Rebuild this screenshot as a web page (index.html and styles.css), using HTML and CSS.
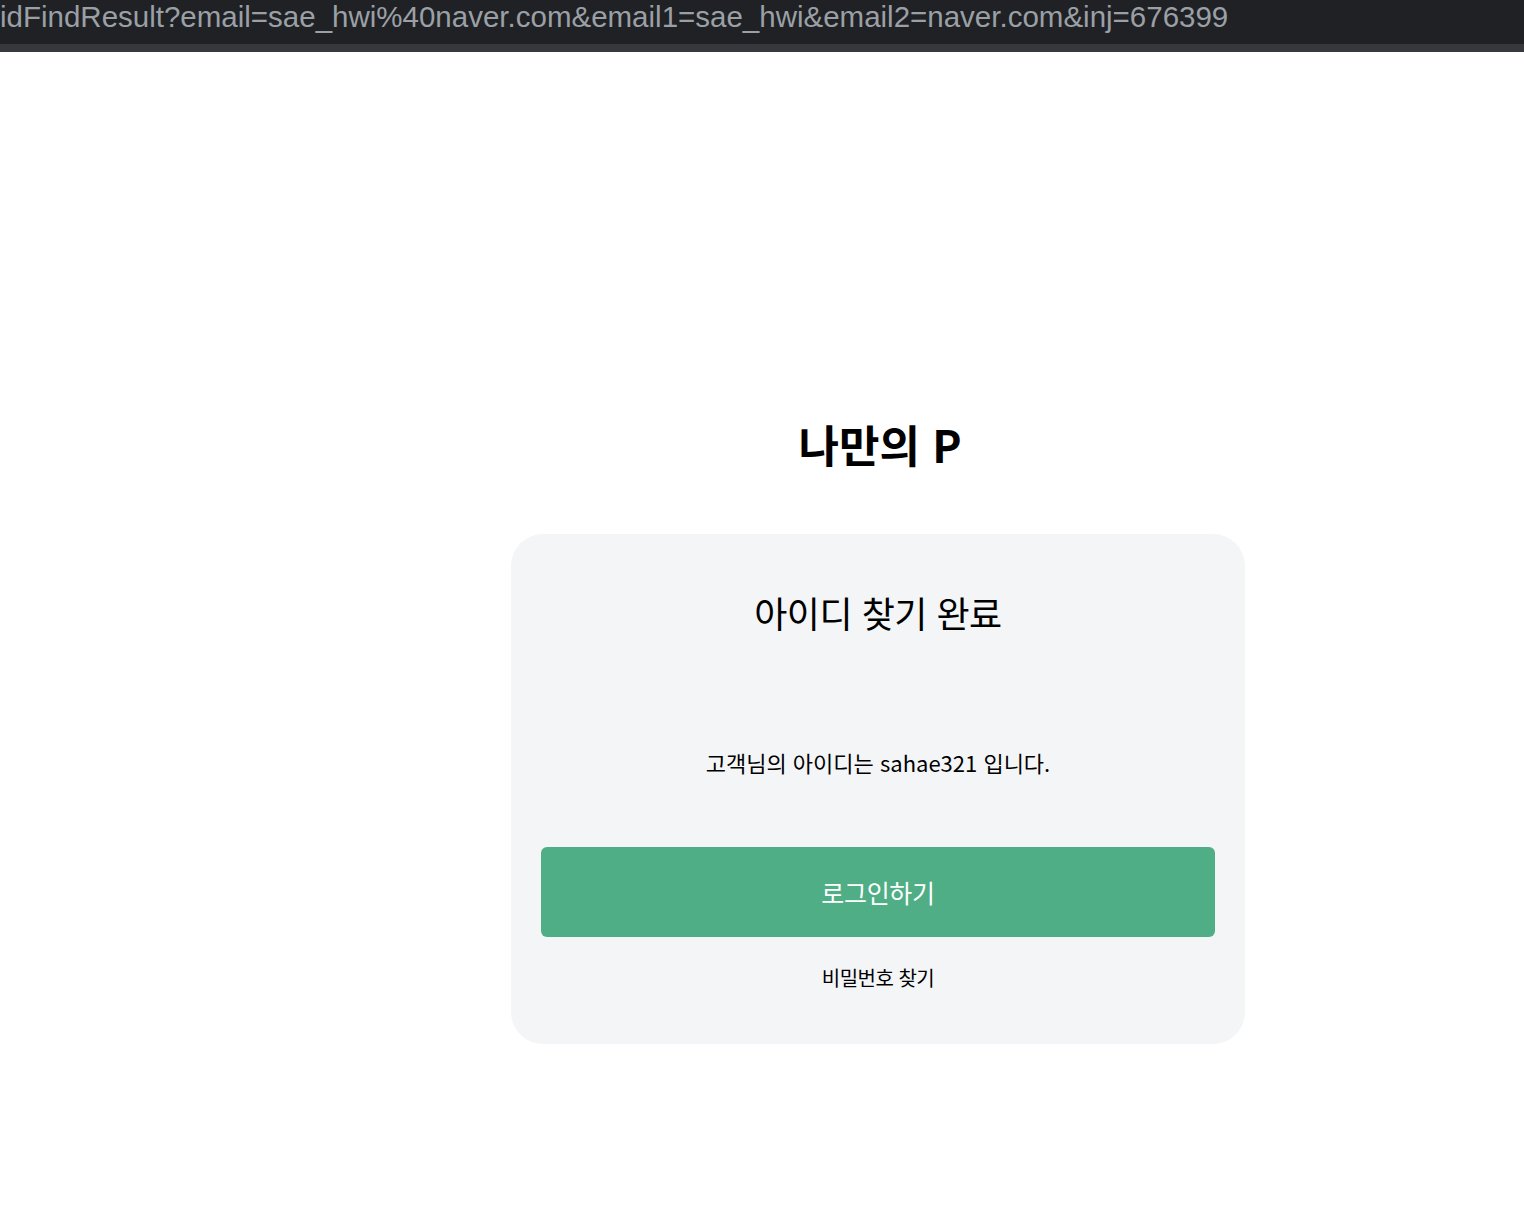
FILE: index.html
```html
<!DOCTYPE html>
<html lang="ko">
<head>
<meta charset="utf-8">
<title>아이디 찾기 완료</title>
<link rel="stylesheet" href="styles.css">
</head>
<body>
<header class="urlbar">
  <div class="url">idFindResult?email=sae_hwi%40naver.com&amp;email1=sae_hwi&amp;email2=naver.com&amp;inj=676399</div>
</header>
<div class="urlstrip"></div>
<main class="page">
  <h1 class="logo">나만의 P</h1>
  <section class="card">
    <h2 class="card-title">아이디 찾기 완료</h2>
    <p class="result">고객님의 아이디는 sahae321 입니다.</p>
    <button class="login-btn" type="button">로그인하기</button>
    <a class="find-pw" href="#">비밀번호 찾기</a>
  </section>
</main>
</body>
</html>
```

FILE: styles.css
```css
* { box-sizing: border-box; }
html, body { margin: 0; padding: 0; background: #ffffff; }
body { font-family: "Noto Sans CJK KR", "Noto Sans", sans-serif; color: #000; }

.urlbar {
  height: 44px;
  background: #202124;
  overflow: hidden;
  white-space: nowrap;
}
.url {
  font-family: "Liberation Sans", Arial, sans-serif;
  font-size: 29.5px;
  line-height: 34px;
  color: #9aa0a6;
  padding-left: 0;
}
.urlstrip { height: 8px; background: #37383b; }

.page {
  display: flex;
  flex-direction: column;
  align-items: center;
  padding-top: 362px;
  padding-left: 232px;
}
.logo {
  margin: 0 0 0 4px;
  font-size: 44px;
  font-weight: 700;
  line-height: 60px;
  letter-spacing: 0;
}
.card {
  margin-top: 60px;
  width: 734px;
  height: 510px;
  background: #f4f5f7;
  border-radius: 32px;
  padding: 53px 30px 0;
  display: flex;
  flex-direction: column;
  align-items: center;
}
.card-title {
  margin: 0;
  font-size: 36px;
  font-weight: 400;
  line-height: 50px;
  letter-spacing: -0.5px;
}
.result {
  margin: 110px 0 0;
  font-size: 22px;
  line-height: 30px;
  letter-spacing: 0;
}
.login-btn {
  margin-top: 70px;
  width: 100%;
  height: 90px;
  border: none;
  border-radius: 6px;
  background: #4fae85;
  color: #ffffff;
  font-family: inherit;
  font-size: 25px;
  letter-spacing: -0.3px;
}
.find-pw {
  margin-top: 25px;
  font-size: 20px;
  line-height: 32px;
  color: #000;
  text-decoration: none;
  letter-spacing: -0.5px;
}
```
